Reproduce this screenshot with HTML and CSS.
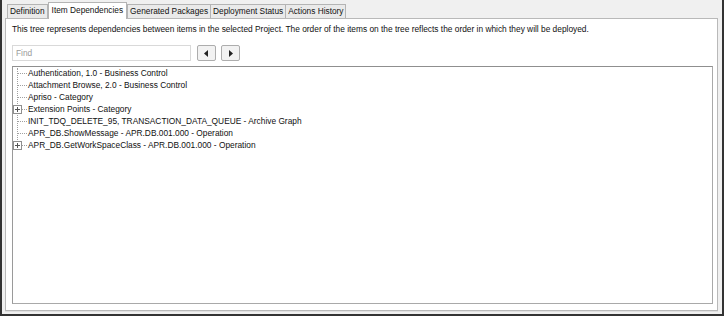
FILE: index.html
```html
<!DOCTYPE html>
<html>
<head>
<meta charset="utf-8">
<link rel="stylesheet" href="styles.css">
</head>
<body>
<div class="window">
  <div class="tabs">
    <div class="tab">Definition</div>
    <div class="tab active">Item Dependencies</div>
    <div class="tab">Generated Packages</div>
    <div class="tab">Deployment Status</div>
    <div class="tab">Actions History</div>
  </div>
  <div class="panel">
    <p class="desc">This tree represents dependencies between items in the selected Project. The order of the items on the tree reflects the order in which they will be deployed.</p>
    <div class="findrow">
      <div class="find">Find</div>
      <div class="btn"><svg width="5" height="7" viewBox="0 0 5 7"><path d="M4 0 L0 3.5 L4 7 Z" fill="#222"/></svg></div>
      <div class="btn"><svg width="5" height="7" viewBox="0 0 5 7"><path d="M1 0 L5 3.5 L1 7 Z" fill="#222"/></svg></div>
    </div>
    <div class="tree">
      <div class="vline"></div>
      <div class="row"><span class="branch"></span><span class="label">Authentication, 1.0 - Business Control</span></div>
      <div class="row"><span class="branch"></span><span class="label">Attachment Browse, 2.0 - Business Control</span></div>
      <div class="row"><span class="branch"></span><span class="label">Apriso - Category</span></div>
      <div class="row"><span class="branch"></span><span class="plus"></span><span class="label">Extension Points - Category</span></div>
      <div class="row"><span class="branch"></span><span class="label">INIT_TDQ_DELETE_95, TRANSACTION_DATA_QUEUE - Archive Graph</span></div>
      <div class="row"><span class="branch"></span><span class="label">APR_DB.ShowMessage - APR.DB.001.000 - Operation</span></div>
      <div class="row last"><span class="branch"></span><span class="plus"></span><span class="label">APR_DB.GetWorkSpaceClass - APR.DB.001.000 - Operation</span></div>
    </div>
  </div>
</div>
</body>
</html>
```
FILE: styles.css
```css
html, body {
  margin: 0;
  padding: 0;
  background: #f0f0f0;
}
.window {
  width: 724px;
  height: 316px;
  box-sizing: border-box;
  border-left: 2px solid #333;
  border-right: 2px solid #333;
  border-bottom: 2px solid #333;
  background: #f0f0f0;
  padding: 2px 4px 3px 3px;
  display: flex;
  flex-direction: column;
  font-family: "Liberation Sans", Arial, sans-serif;
  font-size: 8.35px;
  color: #111;
}
.tabs {
  display: flex;
  align-items: flex-end;
  padding-left: 2px;
  height: 16px;
  position: relative;
  z-index: 1;
  font-size: 8.3px;
}
.tab {
  height: 14px;
  box-sizing: border-box;
  border: 1px solid #b4b4b4;
  border-bottom: none;
  background: #eaeaea;
  padding: 0 2px;
  line-height: 13px;
  margin-right: -1px;
}
.tab.active {
  height: 17px;
  margin-bottom: -1px;
  background: #fff;
  padding: 0 3px;
  line-height: 14px;
  margin-left: 1px;
  margin-right: 0;
}
.panel {
  flex: 1;
  background: #fff;
  border: 1px solid #b9b9b9;
  box-shadow: 0 1px 0 #e0e0e0;
  padding: 4px 4px 6px 6px;
  display: flex;
  flex-direction: column;
}
.desc {
  margin: 0;
  height: 12px;
  line-height: 12px;
}
.findrow {
  display: flex;
  align-items: center;
  margin-top: 10px;
  gap: 5px;
}
.find {
  width: 179px;
  height: 16px;
  box-sizing: border-box;
  border: 1px solid #d9d9d9;
  color: #9a9a9a;
  padding-left: 3px;
  line-height: 14px;
  margin-right: 1px;
}
.btn {
  width: 19px;
  height: 16px;
  box-sizing: border-box;
  border: 1px solid #adadad;
  border-radius: 2px;
  background: #f2f2f2;
  display: flex;
  align-items: center;
  justify-content: center;
}
.tree {
  margin-top: 5px;
  flex: 1;
  border: 1px solid #a9a9a9;
  border-top-color: #8f8f8f;
  border-left-color: #9a9a9a;
  padding-top: 0;
  position: relative;
}
.vline {
  position: absolute;
  left: 4px;
  top: 1px;
  height: 78px;
  border-left: 1px dotted #a0a0a0;
}
.row {
  height: 12px;
  line-height: 12px;
  display: flex;
  align-items: center;
  position: relative;
  white-space: nowrap;
}
.branch {
  width: 9px;
  margin-left: 5px;
  border-top: 1px dotted #a0a0a0;
  margin-right: 1px;
}
.plus {
  position: absolute;
  left: 0;
  top: 2px;
  width: 7px;
  height: 7px;
  border: 1px solid #8f8f8f;
  background: #fff linear-gradient(#555, #555) center / 5px 1px no-repeat;
}
.plus::after {
  content: "";
  position: absolute;
  left: 3px;
  top: 1px;
  width: 1px;
  height: 5px;
  background: #555;
}
```
